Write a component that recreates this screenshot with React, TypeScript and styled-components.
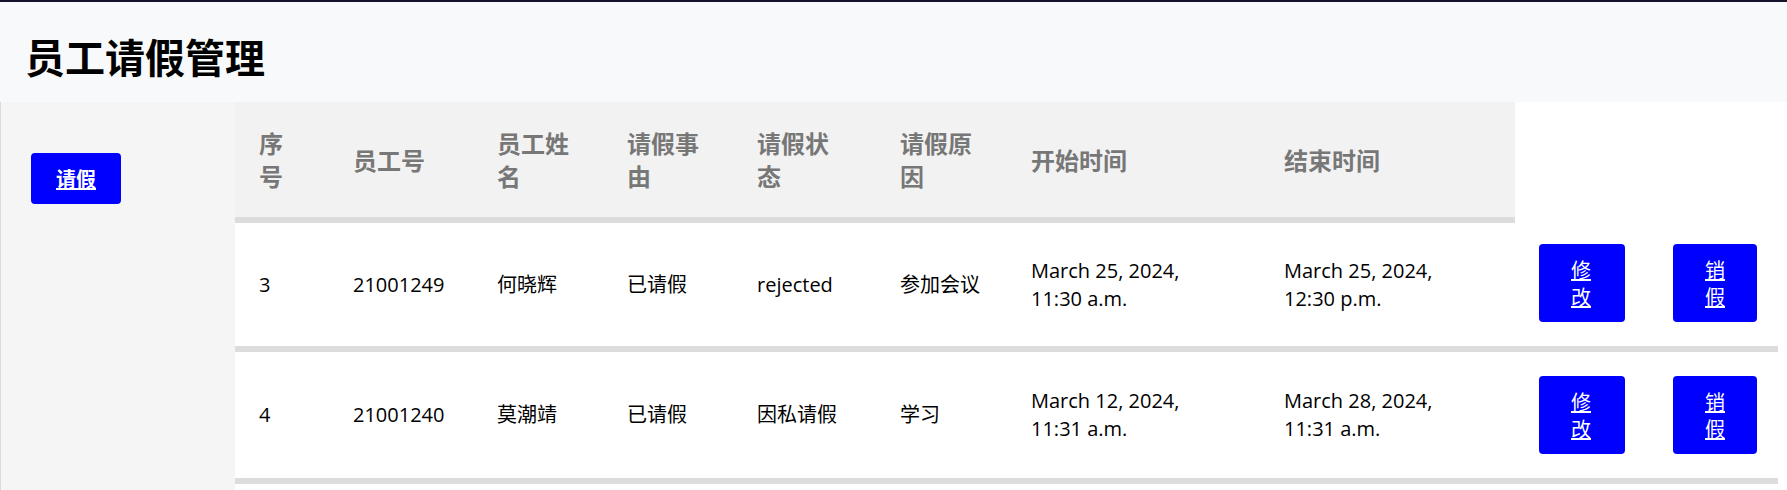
import React from 'react';
import styled, { createGlobalStyle } from 'styled-components';

interface LeaveRecord {
  id: number;
  staffNo: string;
  name: string;
  matter: string;
  status: string;
  reason: string;
  start: [string, string];
  end: [string, string];
}

const GlobalStyle = createGlobalStyle`
  html, body {
    margin: 0;
    padding: 0;
    background: #ffffff;
  }
  body {
    font-family: "Open Sans", "Noto Sans CJK SC", sans-serif;
    font-size: 20px;
    color: #000;
  }
`;

const Page = styled.div`
  min-height: 100vh;
  display: flex;
  flex-direction: column;
  border-top: 2px solid #14142e;
  box-sizing: border-box;
`;

const Header = styled.header`
  height: 100px;
  background: #f8f9fa;
  display: flex;
  align-items: center;
  padding: 8px 25px 0;
  box-sizing: border-box;
`;

const Title = styled.h1`
  margin: 0;
  font-family: "Noto Sans CJK SC", sans-serif;
  font-size: 40px;
  font-weight: 700;
  line-height: 1;
`;

const Body = styled.div`
  flex: 1;
  display: flex;
`;

const Sidebar = styled.aside`
  width: 235px;
  flex-shrink: 0;
  box-sizing: border-box;
  background: #f5f5f5;
  border-left: 1px solid #dcdcdc;
  padding: 51px 0 0 30px;
`;

const ActionLink = styled.a<{ $bold?: boolean }>`
  display: inline-block;
  vertical-align: middle;
  background: #0000ff;
  color: #fff;
  border-radius: 4px;
  text-decoration: underline;
  font-family: "Noto Sans CJK SC", sans-serif;
  font-size: 20px;
  line-height: 27px;
  font-weight: ${(p) => (p.$bold ? 700 : 400)};
  padding: ${(p) => (p.$bold ? '12px 25px' : '12px 32px')};
  cursor: pointer;
`;

const Main = styled.main`
  flex: 1;
  padding-right: 9px;
`;

const Table = styled.table`
  width: 100%;
  border-collapse: collapse;
  table-layout: fixed;
`;

const HeadCell = styled.th`
  background: #f2f2f2;
  color: #777;
  font-family: "Noto Sans CJK SC", sans-serif;
  font-size: 24px;
  font-weight: 700;
  line-height: 33px;
  text-align: left;
  vertical-align: middle;
  padding: 24px 24px 25px;
  border-bottom: 6px solid #dcdcdc;
`;

const Cell = styled.td`
  font-size: 20px;
  line-height: 28px;
  vertical-align: middle;
  padding: 24px;
  border-bottom: 6px solid #dcdcdc;
`;

const columns = [94, 144, 130, 130, 143, 131, 253, 255, 134, 129];
const headings = ['序号', '员工号', '员工姓名', '请假事由', '请假状态', '请假原因', '开始时间', '结束时间'];

const records: LeaveRecord[] = [
  {
    id: 3,
    staffNo: '21001249',
    name: '何晓辉',
    matter: '已请假',
    status: 'rejected',
    reason: '参加会议',
    start: ['March 25, 2024,', '11:30 a.m.'],
    end: ['March 25, 2024,', '12:30 p.m.'],
  },
  {
    id: 4,
    staffNo: '21001240',
    name: '莫潮靖',
    matter: '已请假',
    status: '因私请假',
    reason: '学习',
    start: ['March 12, 2024,', '11:31 a.m.'],
    end: ['March 28, 2024,', '11:31 a.m.'],
  },
];

const App: React.FC = () => {
  return (
    <>
      <GlobalStyle />
      <Page>
        <Header>
          <Title>员工请假管理</Title>
        </Header>
        <Body>
          <Sidebar>
            <ActionLink $bold>请假</ActionLink>
          </Sidebar>
          <Main>
            <Table>
              <colgroup>
                {columns.map((w, i) => (
                  <col key={i} style={{ width: w }} />
                ))}
              </colgroup>
              <thead>
                <tr>
                  {headings.map((h) => (
                    <HeadCell key={h}>{h}</HeadCell>
                  ))}
                </tr>
              </thead>
              <tbody>
                {records.map((r) => (
                  <tr key={r.id}>
                    <Cell>{r.id}</Cell>
                    <Cell>{r.staffNo}</Cell>
                    <Cell>{r.name}</Cell>
                    <Cell>{r.matter}</Cell>
                    <Cell>{r.status}</Cell>
                    <Cell>{r.reason}</Cell>
                    <Cell>
                      {r.start[0]}
                      <br />
                      {r.start[1]}
                    </Cell>
                    <Cell>
                      {r.end[0]}
                      <br />
                      {r.end[1]}
                    </Cell>
                    <Cell>
                      <ActionLink>修改</ActionLink>
                    </Cell>
                    <Cell>
                      <ActionLink>销假</ActionLink>
                    </Cell>
                  </tr>
                ))}
              </tbody>
            </Table>
          </Main>
        </Body>
      </Page>
    </>
  );
};

export default App;
